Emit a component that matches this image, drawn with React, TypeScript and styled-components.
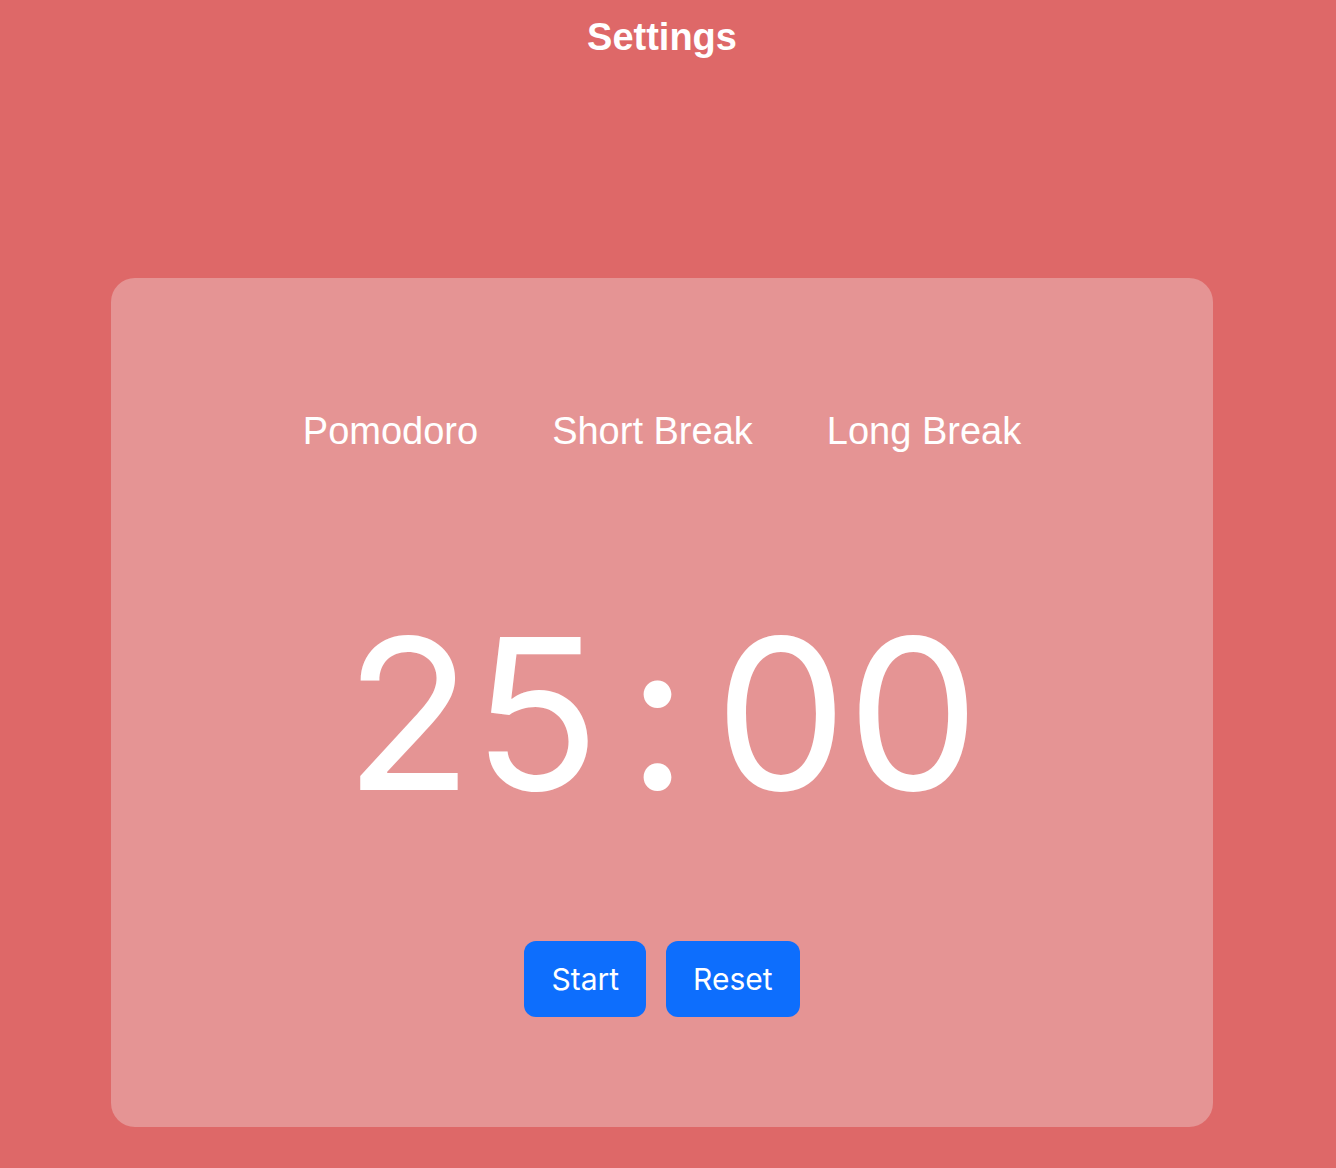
import React from "react";
import styled, { createGlobalStyle } from "styled-components";

const GlobalStyle = createGlobalStyle`
  html, body {
    margin: 0;
    padding: 0;
    background: #DE6868;
  }
  body {
    font-family: "Liberation Sans", Arial, sans-serif;
  }
`;

const Page = styled.div`
  width: 1324px;
  min-height: 1168px;
  display: flex;
  flex-direction: column;
  align-items: center;
  background: #DE6868;
`;

const Header = styled.header`
  width: 100%;
  display: flex;
  justify-content: center;
  padding-top: 15px;
`;

const Title = styled.h1`
  margin: 0;
  font-family: "Liberation Sans", Arial, sans-serif;
  font-size: 38px;
  font-weight: 700;
  line-height: 44px;
  color: #FFFFFF;
`;

const Card = styled.main`
  margin-top: 219px;
  width: 1102px;
  box-sizing: border-box;
  padding: 131px 0 110px;
  background: #E59494;
  border-radius: 24px;
  display: flex;
  flex-direction: column;
  align-items: center;
`;

const Tabs = styled.nav`
  display: flex;
  gap: 74px;
`;

const Tab = styled.button`
  border: none;
  background: transparent;
  padding: 0;
  cursor: pointer;
  font-family: "Liberation Sans", Arial, sans-serif;
  font-size: 38px;
  line-height: 44px;
  color: #FFFFFF;
`;

const Clock = styled.div`
  margin-top: 134px;
  display: flex;
  align-items: center;
  gap: 27px;
  font-family: Inter, "Noto Sans", sans-serif;
  font-size: 210px;
  line-height: 254px;
  color: #FFFFFF;
`;

const Digits = styled.span``;

const Colon = styled.span`
  display: inline-block;
`;

const Controls = styled.div`
  margin-top: 100px;
  display: flex;
  gap: 20px;
`;

const ActionButton = styled.button`
  height: 76px;
  padding: 0 27px;
  border: none;
  border-radius: 12px;
  background: #0D6EFD;
  color: #FFFFFF;
  font-family: Inter, "Noto Sans", sans-serif;
  font-size: 30px;
  cursor: pointer;
`;

export default function App() {
  return (
    <>
      <GlobalStyle />
      <Page>
        <Header>
          <Title>Settings</Title>
        </Header>
        <Card>
          <Tabs>
            <Tab>Pomodoro</Tab>
            <Tab>Short Break</Tab>
            <Tab>Long Break</Tab>
          </Tabs>
          <Clock>
            <Digits>25</Digits>
            <Colon>:</Colon>
            <Digits>00</Digits>
          </Clock>
          <Controls>
            <ActionButton>Start</ActionButton>
            <ActionButton>Reset</ActionButton>
          </Controls>
        </Card>
      </Page>
    </>
  );
}
